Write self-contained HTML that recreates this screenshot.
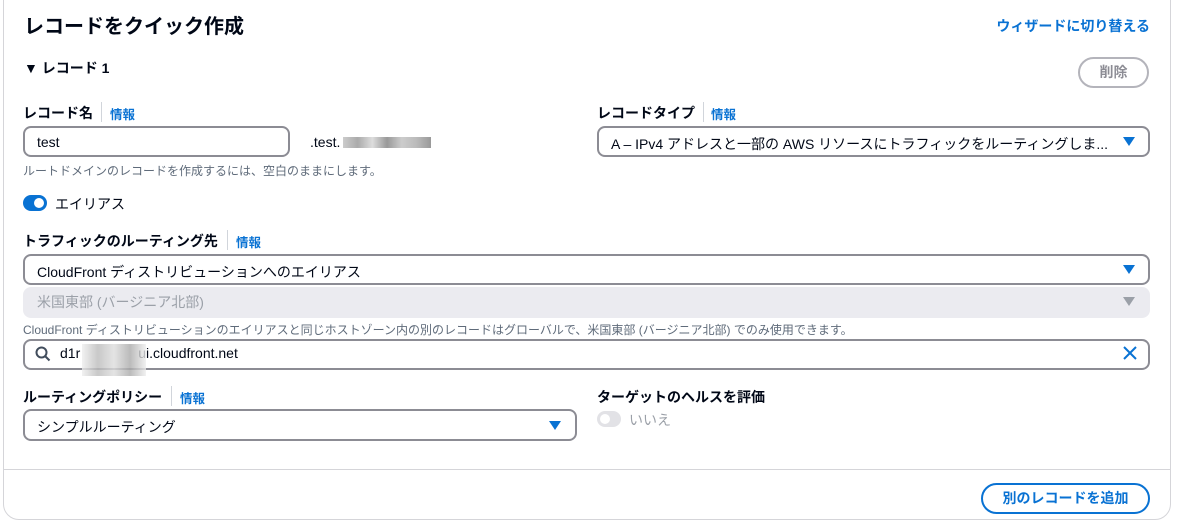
<!DOCTYPE html>
<html><head><meta charset="utf-8"><style>
body{margin:0;width:1178px;height:521px;overflow:hidden;background:#fff;font-family:"Liberation Sans","Noto Sans CJK JP",sans-serif;color:#000716;}
.a{position:absolute;white-space:nowrap;}
.card{position:absolute;left:3px;top:-20px;width:1166px;height:538px;border:1px solid #d5d5d9;border-radius:16px;}
.lbl{font-size:14px;font-weight:bold;}
.info{font-size:12.5px;font-weight:bold;color:#0972d3;}
.sep{position:absolute;width:1px;height:20px;background:#d1d5db;}
.box{position:absolute;border:2px solid #8c8c94;border-radius:8px;box-sizing:border-box;font-size:14px;}
.tri{position:absolute;width:0;height:0;border-left:6px solid transparent;border-right:6px solid transparent;border-top:9px solid #0972d3;}
.hint{font-size:12px;color:#5f6b7a;}
</style></head><body>
<div class="card"></div>
<div class="a" style="left:24px;top:10px;font-size:20px;font-weight:bold;">レコードをクイック作成</div>
<div class="a" style="right:28px;top:16px;font-size:14px;font-weight:bold;color:#0972d3;">ウィザードに切り替える</div>
<div class="a" style="left:24px;top:58px;font-size:14px;font-weight:bold;">▼ レコード 1</div>
<div class="a" style="left:1078px;top:57px;width:71px;height:31px;box-sizing:border-box;border:2px solid #b4b4bb;border-radius:16px;text-align:center;line-height:27px;font-size:14px;font-weight:bold;color:#8c8c94;">削除</div>

<div class="a lbl" style="left:23px;top:103px;">レコード名</div><div class="sep" style="left:101px;top:102px;"></div><div class="a info" style="left:110px;top:104px;">情報</div>
<div class="box" style="left:23px;top:126px;width:267px;height:31px;"><span class="a" style="left:12px;top:6px;">test</span></div>
<div class="a" style="left:310px;top:134px;font-size:14px;">.test.</div>
<div class="a" style="left:343px;top:137px;width:88px;height:11px;background:linear-gradient(90deg,#ccc,#aaa,#ddd,#999,#ccc,#bbb,#999);"></div>
<div class="a hint" style="left:23px;top:162px;">ルートドメインのレコードを作成するには、空白のままにします。</div>
<div class="a" style="left:23px;top:195px;width:24px;height:16px;border-radius:8px;background:#0972d3;"></div>
<div class="a" style="left:34px;top:198px;width:10px;height:10px;border-radius:50%;background:#fff;"></div>
<div class="a" style="left:55px;top:194px;font-size:14px;">エイリアス</div>

<div class="a lbl" style="left:597px;top:103px;">レコードタイプ</div><div class="sep" style="left:703px;top:102px;"></div><div class="a info" style="left:711px;top:104px;">情報</div>
<div class="box" style="left:597px;top:126px;width:553px;height:31px;"><span class="a" style="left:12px;top:6px;">A – IPv4 アドレスと一部の AWS リソースにトラフィックをルーティングしま...</span></div>
<div class="tri" style="left:1123px;top:137px;"></div>

<div class="a lbl" style="left:23px;top:231px;">トラフィックのルーティング先</div><div class="sep" style="left:227px;top:230px;"></div><div class="a info" style="left:236px;top:232px;">情報</div>
<div class="box" style="left:23px;top:254px;width:1127px;height:31px;"><span class="a" style="left:12px;top:6px;">CloudFront ディストリビューションへのエイリアス</span></div>
<div class="tri" style="left:1123px;top:265px;"></div>
<div class="a" style="left:23px;top:287px;width:1127px;height:31px;border-radius:8px;background:#ebebf0;"></div>
<div class="a" style="left:37px;top:292px;font-size:14px;color:#9ba0a8;">米国東部 (バージニア北部)</div>
<div class="tri" style="left:1123px;top:297px;border-top-color:#9ba0a8;"></div>
<div class="a hint" style="left:23px;top:321px;">CloudFront ディストリビューションのエイリアスと同じホストゾーン内の別のレコードはグローバルで、米国東部 (バージニア北部) でのみ使用できます。</div>
<div class="box" style="left:23px;top:339px;width:1127px;height:31px;"></div>
<svg class="a" style="left:34px;top:345px;" width="18" height="18" viewBox="0 0 18 18"><circle cx="7.5" cy="7.5" r="5" fill="none" stroke="#414d5c" stroke-width="2"/><path d="M11 11l4.5 4.5" stroke="#414d5c" stroke-width="2"/></svg>
<div class="a" style="left:60px;top:345px;font-size:14px;">d1r<span style="display:inline-block;width:58px;"></span>ui.cloudfront.net</div>
<div class="a" style="left:82px;top:344px;width:64px;height:32px;background:linear-gradient(90deg,#eee,#bbb,#ddd,#aaa,#eee);opacity:.8;"></div>
<svg class="a" style="left:1122px;top:345px;" width="16" height="16" viewBox="0 0 16 16"><path d="M2 2l12 12M14 2L2 14" stroke="#0972d3" stroke-width="2"/></svg>

<div class="a lbl" style="left:23px;top:387px;">ルーティングポリシー</div><div class="sep" style="left:171px;top:386px;"></div><div class="a info" style="left:180px;top:388px;">情報</div>
<div class="box" style="left:23px;top:409px;width:554px;height:32px;"><span class="a" style="left:12px;top:6px;">シンプルルーティング</span></div>
<div class="tri" style="left:549px;top:421px;"></div>

<div class="a lbl" style="left:597px;top:387px;">ターゲットのヘルスを評価</div>
<div class="a" style="left:597px;top:411px;width:24px;height:16px;border-radius:8px;background:#e2e2e6;"></div>
<div class="a" style="left:600px;top:414px;width:10px;height:10px;border-radius:50%;background:#fff;"></div>
<div class="a" style="left:629px;top:410px;font-size:14px;color:#9ba0a8;">いいえ</div>

<div class="a" style="left:4px;top:469px;width:1166px;height:1px;background:#d5d5d9;"></div>
<div class="a" style="left:981px;top:483px;width:169px;height:31px;box-sizing:border-box;border:2px solid #0972d3;border-radius:16px;text-align:center;line-height:27px;font-size:14px;font-weight:bold;color:#0972d3;">別のレコードを追加</div>
</body></html>
